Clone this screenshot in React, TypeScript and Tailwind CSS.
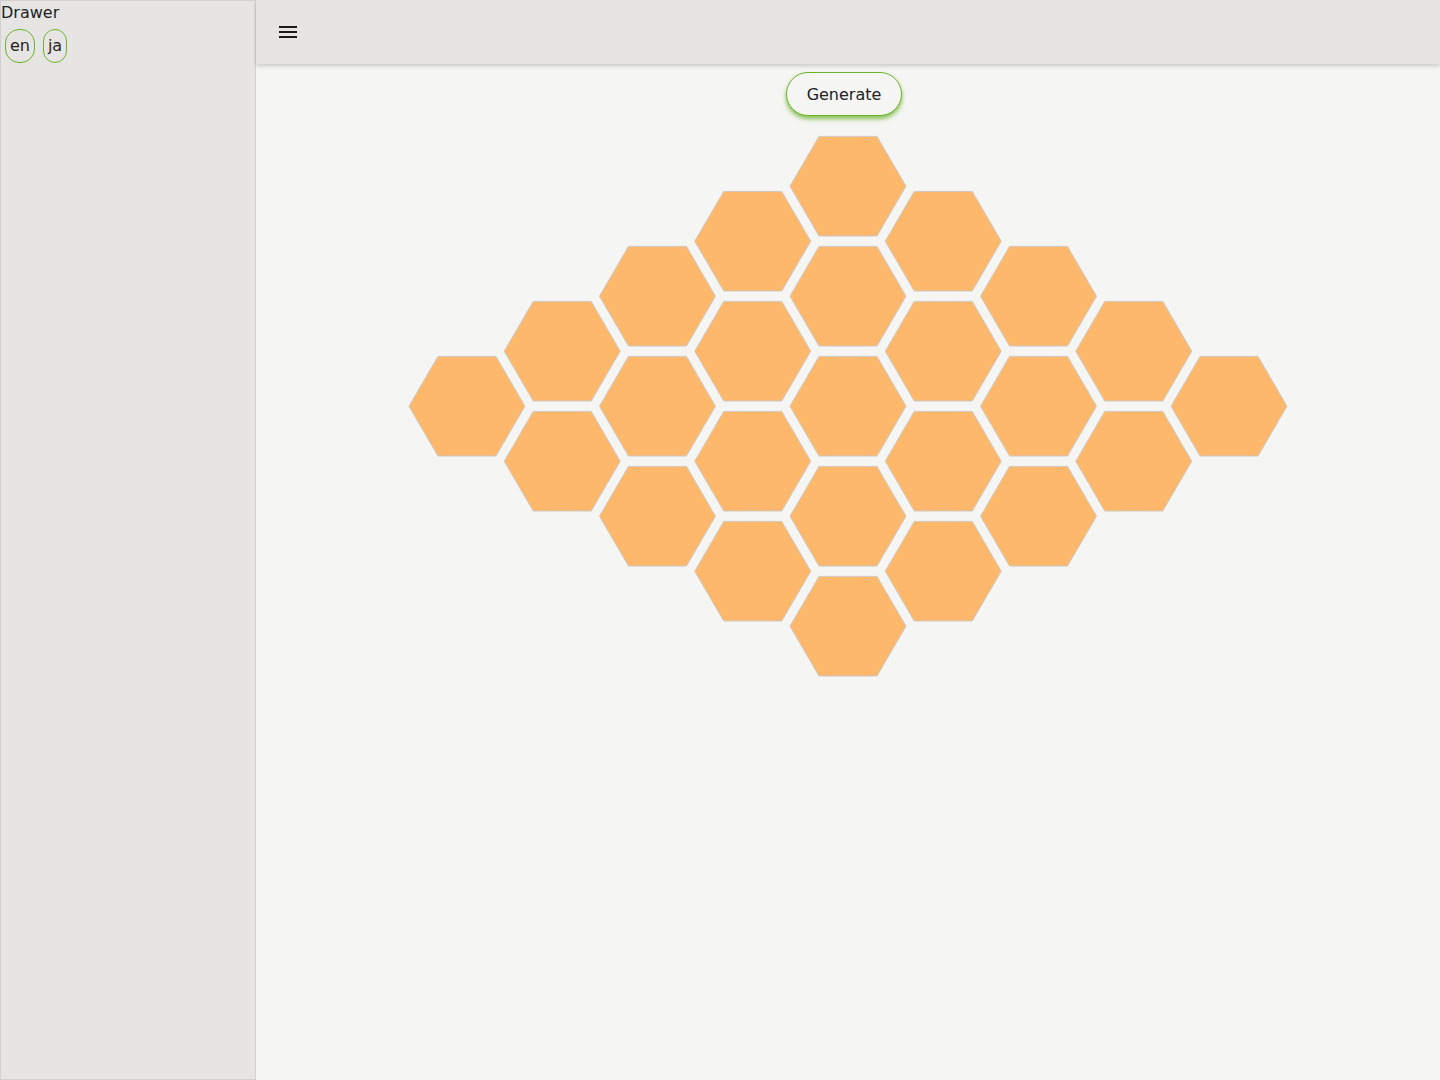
import React from "react";

const R = 58;
const STEP_X = 95.26;
const STEP_Y = 110;

function hexPoints(cx: number, cy: number) {
  const h = 49.8;
  const pts = [
    [cx - R, cy],
    [cx - R / 2, cy - h],
    [cx + R / 2, cy - h],
    [cx + R, cy],
    [cx + R / 2, cy + h],
    [cx - R / 2, cy + h],
  ];
  return pts.map((p) => p.map((v) => v.toFixed(2)).join(",")).join(" ");
}

function Hexes() {
  const items: { cx: number; cy: number; key: string }[] = [];
  for (let c = 0; c < 9; c++) {
    const k = Math.abs(c - 4);
    const count = 5 - k;
    for (let i = 0; i < count; i++) {
      const cx = 592 + (c - 4) * STEP_X;
      const cy = 66.2 + k * 55 + i * STEP_Y;
      items.push({ cx, cy, key: `${c}-${i}` });
    }
  }
  return (
    <svg width="1184" height="600" viewBox="0 0 1184 600" className="block">
      {items.map((it) => (
        <polygon
          key={it.key}
          points={hexPoints(it.cx, it.cy)}
          fill="#feb86b"
          stroke="#cfc9c1"
          strokeWidth="1"
        />
      ))}
    </svg>
  );
}

export default function App() {
  return (
    <div
      className="flex h-[1080px] w-[1440px] overflow-hidden bg-[#f5f5f3] text-[#1f1f1f]"
      style={{ fontFamily: '"DejaVu Sans", sans-serif' }}
    >
      <aside className="h-[1080px] w-[256px] shrink-0 border border-[#d2d1cf] bg-[#e6e5e3]">
        <div className="pt-[2px] text-[16px] leading-[20px]">Drawer</div>
        <div className="mt-[6px] flex gap-[8px] pl-[4px]">
          <button className="flex h-[34px] w-[30px] items-center justify-center rounded-[14px] border border-[#6cb52a] text-[16px] leading-none">
            en
          </button>
          <button className="flex h-[34px] w-[24px] items-center justify-center rounded-[12px] border border-[#6cb52a] text-[16px] leading-none">
            ja
          </button>
        </div>
      </aside>
      <div className="flex min-w-0 flex-1 flex-col">
        <header className="relative z-10 flex h-[64px] shrink-0 items-center bg-[#e6e5e3] pl-[23px] shadow-[0_2px_4px_rgba(0,0,0,0.18)]">
          <svg width="18" height="12" viewBox="0 0 18 12">
            <rect x="0" y="0" width="18" height="2" fill="#1a1a1a" />
            <rect x="0" y="5" width="18" height="2" fill="#1a1a1a" />
            <rect x="0" y="10" width="18" height="2" fill="#1a1a1a" />
          </svg>
        </header>
        <div className="flex flex-col items-center">
          <div className="mr-[8px] mt-[8px]">
            <button className="h-[44px] w-[116px] rounded-[22px] border border-[#6cb52a] bg-[#f5f5f3] pt-[2px] text-[16px] text-[#222] shadow-[0_3px_4px_rgba(90,170,20,0.7)]">
              Generate
            </button>
          </div>
          <div className="mt-[4px]">
            <Hexes />
          </div>
        </div>
      </div>
    </div>
  );
}
